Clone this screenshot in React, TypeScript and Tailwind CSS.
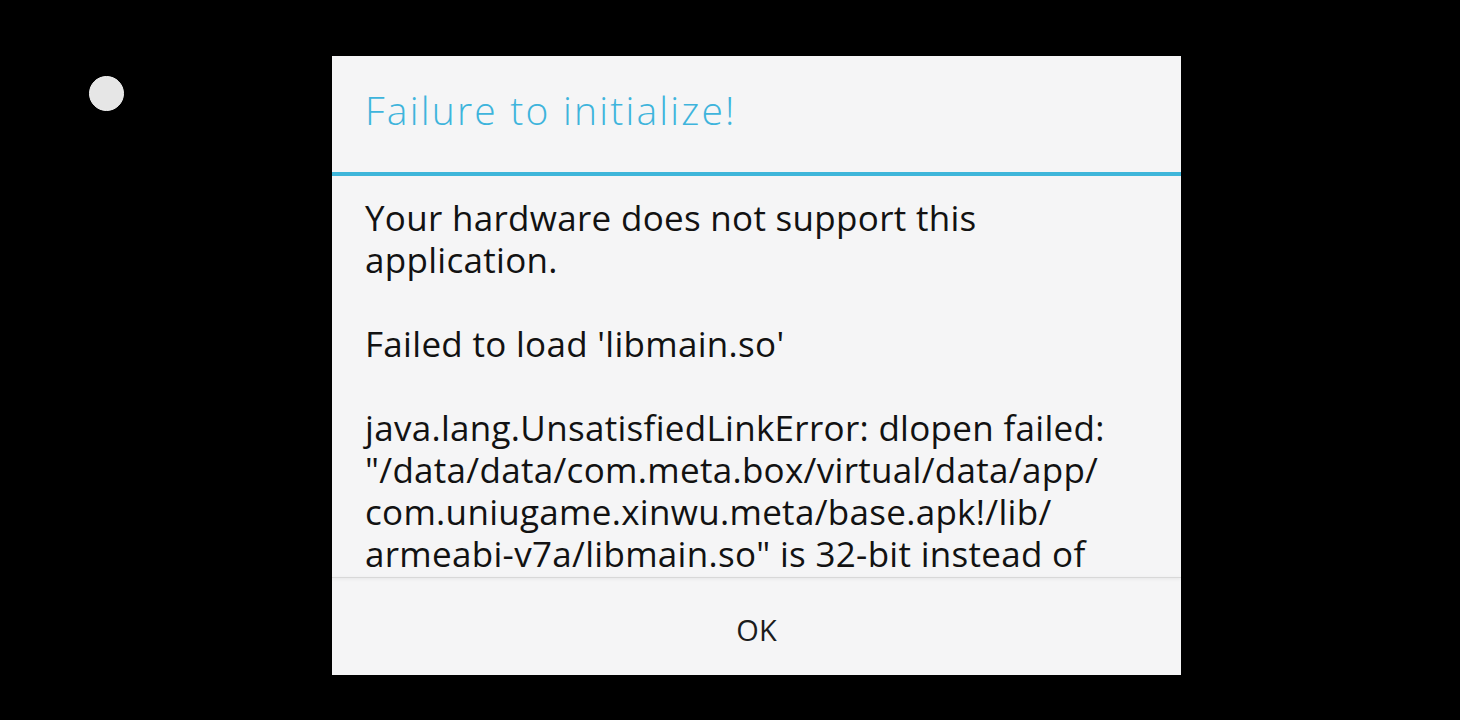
const bodyLines = [
  'Your hardware does not support this',
  'application.',
  '',
  "Failed to load 'libmain.so'",
  '',
  'java.lang.UnsatisfiedLinkError: dlopen failed:',
  '"/data/data/com.meta.box/virtual/data/app/',
  'com.uniugame.xinwu.meta/base.apk!/lib/',
  'armeabi-v7a/libmain.so" is 32-bit instead of',
];

export default function App() {
  return (
    <div className="relative w-[1460px] h-[720px] bg-black overflow-hidden font-['Open_Sans',sans-serif]">
      {/* floating assist dot */}
      <div className="absolute left-[89px] top-[76px] w-[35px] h-[35px] rounded-full bg-[#e6e6e6] border border-[#f2f2f2]" />

      {/* dialog */}
      <div className="absolute left-[332px] top-[56px] w-[849px] h-[619px] bg-[#f5f5f6] flex flex-col">
        <div className="h-[116px] flex items-center px-[33px] pb-[7px]">
          <h1 className="text-[39px] font-light tracking-[2.2px] text-[#3eb4dc]">Failure to initialize!</h1>
        </div>
        <div className="h-[4px] bg-[#3fb6da]" />
        <div className="flex-1 overflow-hidden px-[33px] pt-[21px]">
          <div className="text-[35px] leading-[42px] tracking-[0.3px] text-[#121212]">
            {bodyLines.map((line, i) => (
              <p key={i} className="h-[42px] whitespace-nowrap">
                {line}
              </p>
            ))}
          </div>
        </div>
        <div className="h-[1px] bg-[#d8d8d8] shadow-[0_1px_3px_rgba(0,0,0,0.12)]" />
        <button className="h-[97px] flex items-center justify-center text-[29px] text-[#1c1c1c] pt-[6px]">OK</button>
      </div>
    </div>
  );
}
